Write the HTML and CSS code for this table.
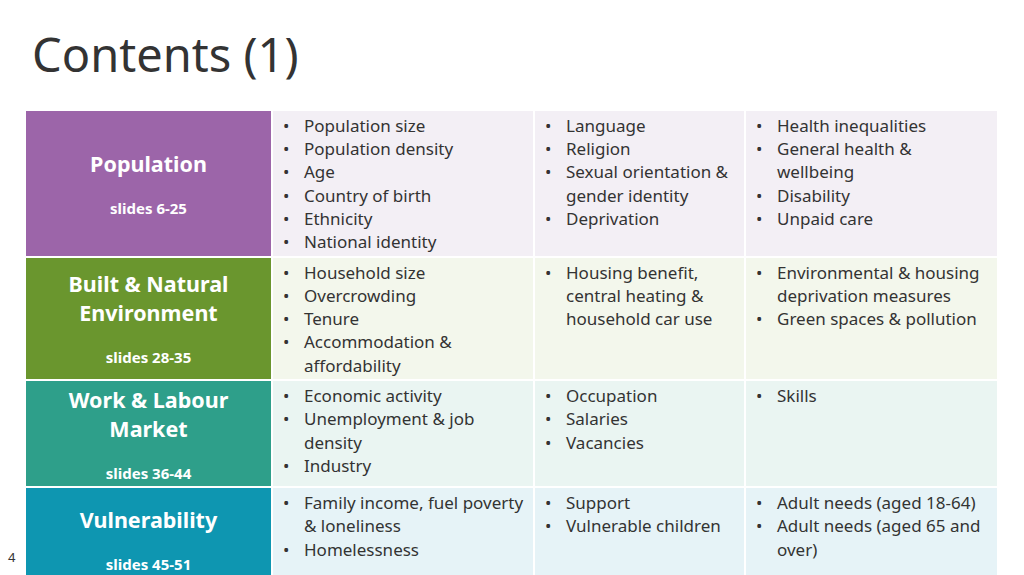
FILE: index.html
```html
<!DOCTYPE html>
<html lang="en">
<head>
<meta charset="utf-8">
<title>Contents (1)</title>
<link rel="stylesheet" href="styles.css">
</head>
<body>
<div class="slide">
  <h1 class="title">Contents (1)</h1>
  <div class="grid">
    <div class="head head-pop">
      <div class="head-title">Population</div>
      <div class="head-slides">slides 6-25</div>
    </div>
    <ul class="cell row-pop">
      <li>Population size</li>
      <li>Population density</li>
      <li>Age</li>
      <li>Country of birth</li>
      <li>Ethnicity</li>
      <li>National identity</li>
    </ul>
    <ul class="cell row-pop">
      <li>Language</li>
      <li>Religion</li>
      <li>Sexual orientation &amp; gender identity</li>
      <li>Deprivation</li>
    </ul>
    <ul class="cell row-pop">
      <li>Health inequalities</li>
      <li>General health &amp; wellbeing</li>
      <li>Disability</li>
      <li>Unpaid care</li>
    </ul>

    <div class="head head-env">
      <div class="head-title">Built &amp; Natural Environment</div>
      <div class="head-slides">slides 28-35</div>
    </div>
    <ul class="cell row-env">
      <li>Household size</li>
      <li>Overcrowding</li>
      <li>Tenure</li>
      <li>Accommodation &amp; affordability</li>
    </ul>
    <ul class="cell row-env">
      <li>Housing benefit, central heating &amp; household car use</li>
    </ul>
    <ul class="cell row-env">
      <li>Environmental &amp; housing deprivation measures</li>
      <li>Green spaces &amp; pollution</li>
    </ul>

    <div class="head head-work">
      <div class="head-title">Work &amp; Labour Market</div>
      <div class="head-slides">slides 36-44</div>
    </div>
    <ul class="cell row-work">
      <li>Economic activity</li>
      <li>Unemployment &amp; job density</li>
      <li>Industry</li>
    </ul>
    <ul class="cell row-work">
      <li>Occupation</li>
      <li>Salaries</li>
      <li>Vacancies</li>
    </ul>
    <ul class="cell row-work">
      <li>Skills</li>
    </ul>

    <div class="head head-vul">
      <div class="head-title">Vulnerability</div>
      <div class="head-slides">slides 45-51</div>
    </div>
    <ul class="cell row-vul">
      <li>Family income, fuel poverty &amp; loneliness</li>
      <li>Homelessness</li>
    </ul>
    <ul class="cell row-vul">
      <li>Support</li>
      <li>Vulnerable children</li>
    </ul>
    <ul class="cell row-vul">
      <li>Adult needs (aged 18-64)</li>
      <li>Adult needs (aged 65 and over)</li>
    </ul>
  </div>
  <div class="page-num">4</div>
</div>
</body>
</html>
```

FILE: styles.css
```css
* { box-sizing: border-box; }
html, body {
  margin: 0;
  padding: 0;
  background: #ffffff;
  overflow: hidden;
}
body {
  font-family: "Noto Sans", "Open Sans", "DejaVu Sans", sans-serif;
  color: #333333;
}
.slide {
  position: relative;
  width: 1024px;
  height: 575px;
  overflow: hidden;
}
.title {
  margin: 0;
  padding: 22px 0 0 32px;
  height: 111px;
  font-size: 47px;
  font-weight: 400;
  line-height: 64px;
  color: #333333;
}
.grid {
  display: grid;
  grid-template-columns: 245px 260px 209px 251px;
  grid-template-rows: auto auto auto 102px;
  gap: 2px;
  margin-left: 26px;
  width: 971px;
}
.head {
  display: flex;
  flex-direction: column;
  justify-content: center;
  align-items: center;
  text-align: center;
  color: #ffffff;
  padding: 3.5px 10px;
}
.head-title {
  font-size: 21.5px;
  font-weight: 700;
  line-height: 29px;
}
.head-slides {
  font-size: 15px;
  font-weight: 700;
  line-height: 20px;
  margin-top: 20px;
}
.head-pop { background: #9c65a9; }
.head-env { background: #6a962e; }
.head-work { background: #2e9f8a; }
.head-vul { background: #0e96b1; }

.cell {
  list-style: none;
  margin: 0;
  padding: 3px 8px 2.5px 10px;
  font-size: 17px;
  line-height: 23.2px;
}
.cell li {
  position: relative;
  padding-left: 21px;
}
.cell li::before {
  content: "\2022";
  position: absolute;
  left: 0;
  top: 0;
}
.row-pop { background: #f3eff5; }
.row-env { background: #f3f7ec; }
.row-work { background: #eaf5f2; }
.row-vul { background: #e6f3f7; }

.page-num {
  position: absolute;
  left: 8px;
  top: 548px;
  font-size: 13px;
  line-height: 18px;
  color: #333333;
}
```
